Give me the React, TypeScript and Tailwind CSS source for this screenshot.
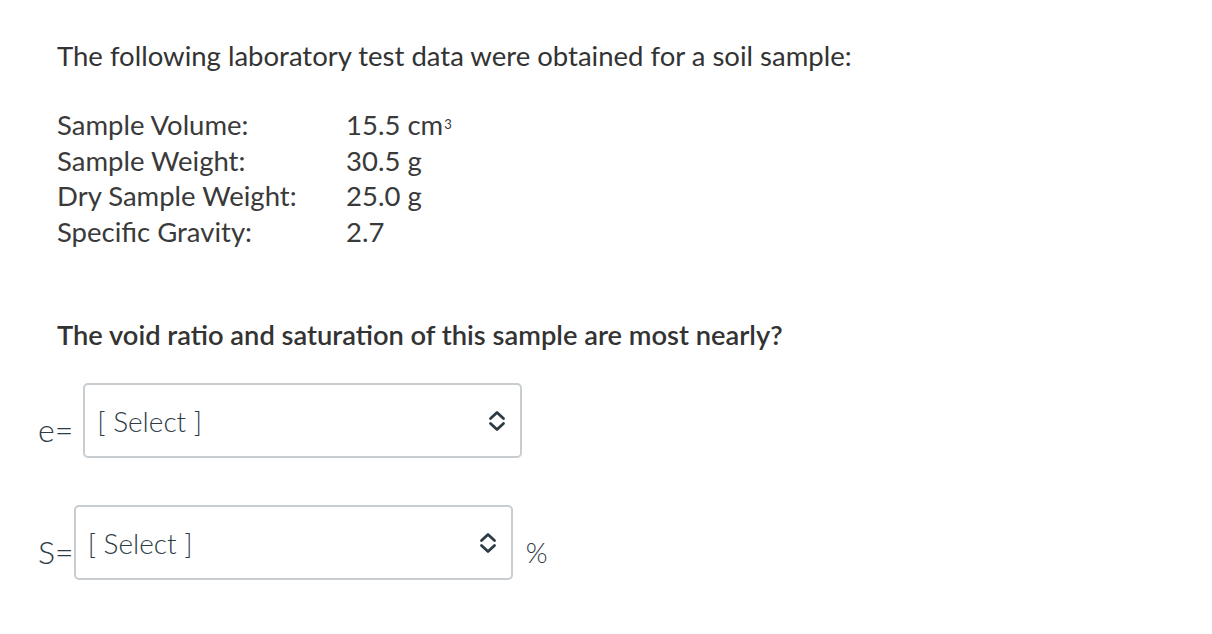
import React from "react";

function Chevrons() {
  return (
    <svg width="18" height="22" viewBox="0 0 18 22" fill="none" stroke="#2d3b45" strokeWidth="2.8" strokeLinecap="round" strokeLinejoin="round">
      <path d="M2.5 8.5 L9 2.5 L15.5 8.5" />
      <path d="M2.5 13.5 L9 19.5 L15.5 13.5" />
    </svg>
  );
}

function SelectBox() {
  return (
    <div className="flex h-[75px] w-[439px] items-center justify-between rounded-[5px] border-2 border-[#c7cdd1] bg-white pl-[12px] pr-[14px]">
      <span className="text-[28px] font-light text-[#2d3b45]">[ Select ]</span>
      <Chevrons />
    </div>
  );
}

export default function App() {
  return (
    <div className="relative h-[634px] w-[1212px] bg-white text-[#2d3b45]" style={{ fontFamily: "Lato, sans-serif" }}>
      <div className="pl-[57px] pt-[39px]">
        <div className="text-[27.5px] leading-[34px] text-[#333]">The following laboratory test data were obtained for a soil sample:</div>
        <div className="mt-[34px] grid grid-cols-[289px_auto] text-[27.5px] leading-[35.5px] text-[#3a3a3a]">
          <div>Sample Volume:</div>
          <div>15.5 cm<sup className="relative top-[-6px] ml-[1px] text-[13px]">3</sup></div>
          <div>Sample Weight:</div>
          <div>30.5 g</div>
          <div>Dry Sample Weight:</div>
          <div>25.0 g</div>
          <div>Specific Gravity:</div>
          <div>2.7</div>
        </div>
        <div className="mt-[69px] text-[27.3px] font-semibold leading-[34px] text-[#333]">The void ratio and saturation of this sample are most nearly?</div>
      </div>
      <div className="mt-[31px] flex items-center pl-[38px]">
        <span className="mr-[10px] mt-[18px] text-[32px] font-light">e=</span>
        <SelectBox />
      </div>
      <div className="mt-[47px] flex items-center pl-[38px]">
        <span className="mt-[18px] text-[32px] font-light">S=</span>
        <SelectBox />
        <span className="ml-[13px] mt-[18px] text-[28px] font-light">%</span>
      </div>
    </div>
  );
}
